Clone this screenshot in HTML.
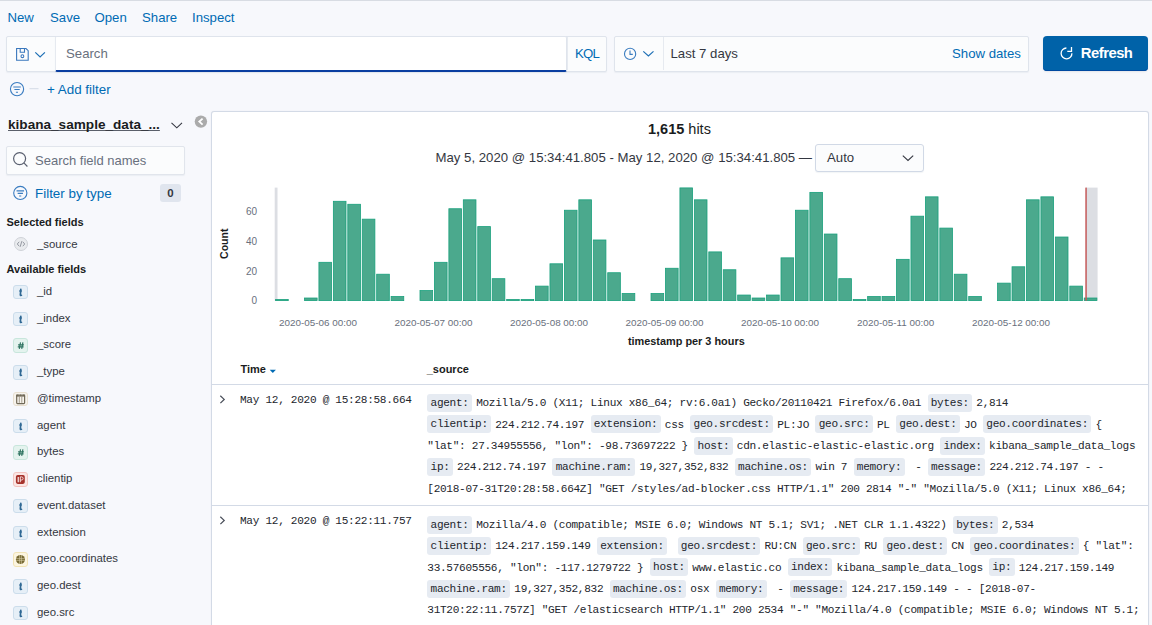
<!DOCTYPE html>
<html><head><meta charset="utf-8"><style>
*{box-sizing:border-box;margin:0;padding:0}
html,body{width:1152px;height:625px;overflow:hidden}
body{background:#F7F8FC;font-family:"Liberation Sans",sans-serif;color:#343741;position:relative}
.a{position:absolute;white-space:nowrap}
.lnk{color:#006BB4}
.menu{top:8px;font-size:13.2px;line-height:20px}
.box{position:absolute;border:1px solid #DFE4EC;background:#FBFCFD;border-radius:2px;box-shadow:0 1px 1px rgba(152,162,179,0.12)}
.fld{left:37px;font-size:11.4px;line-height:16px;color:#343741}
.ic{position:absolute;left:13px;width:14.7px;height:14.7px;border-radius:3px}
.it{background:#E4EEF6;border:1px solid #C9DCEB}
.in{background:#E2F3EE;border:1px solid #C5E5DC}
.mono{font-family:"Liberation Mono",monospace;font-size:11.1px;letter-spacing:-0.3px;color:#22252c}
.src{line-height:21.35px}
.src b{font-weight:400;background:#E6EBF2;border-radius:3px;padding:3.4px 3.25px 2.6px;margin-right:4.2px}
</style></head><body>
<div class="a" style="left:0;top:0;width:1152px;height:1px;background:#D8DCE3"></div>
<div class="a menu lnk" style="left:7.5px">New</div>
<div class="a menu lnk" style="left:50px">Save</div>
<div class="a menu lnk" style="left:94.5px">Open</div>
<div class="a menu lnk" style="left:142px">Share</div>
<div class="a menu lnk" style="left:192px">Inspect</div>
<div class="box" style="left:6px;top:36px;width:601px;height:36px"></div>
<div class="box" style="left:55px;top:36px;width:512px;height:36px;background:#fff;border-bottom:2px solid #0A3EA0"></div>
<div class="box" style="left:614px;top:36px;width:415px;height:36px"></div>
<div class="a" style="left:1043px;top:36px;width:105px;height:35px;background:#0062A8;border-radius:4px;box-shadow:inset 0 -1px 0 #0049A0,0 1px 2px rgba(0,0,0,0.08)"></div>
<svg class="a" style="left:0;top:0" width="1152" height="110" viewBox="0 0 1152 110">
 <g fill="none" stroke="#3B78BD" stroke-width="1.1">
  <path d="M16.6 48.5 H26 L28.2 50.7 V60.2 H16.6 Z"/>
  <path d="M20.2 48.5 V52.3 H24.5 V48.5"/>
  <circle cx="22.4" cy="56.2" r="1.4"/>
 </g>
 <path d="M35.3 52.4 L40.1 57 L44.9 52.4" fill="none" stroke="#1D6FB5" stroke-width="1.2"/>
 <g fill="none" stroke="#3B7DC0" stroke-width="1.1">
  <circle cx="630.1" cy="53.9" r="5.6"/>
  <path d="M630 50.4 V54.4 H632.8"/>
 </g>
 <path d="M643.3 51.4 L648.4 56 L653.5 51.4" fill="none" stroke="#1D6FB5" stroke-width="1.2"/>
 <line x1="663.5" y1="37" x2="663.5" y2="70" stroke="#E6EAF0" stroke-width="1"/>
 <line x1="567.5" y1="37" x2="567.5" y2="70" stroke="#E6EAF0" stroke-width="1"/>
 <line x1="55.5" y1="37" x2="55.5" y2="70" stroke="#E6EAF0" stroke-width="1"/>
 <g fill="none" stroke="#fff" stroke-width="1.3">
  <path d="M1066.4 48 A5.4 5.4 0 1 0 1071.9 53.2"/>
  <path d="M1071.5 47.1 V51.3 H1067.3"/>
 </g>
 <g fill="none" stroke="#3A7CC0" stroke-width="1.1">
  <circle cx="17.05" cy="89.1" r="6.6"/>
  <path d="M13.3 87 H20.8 M14.4 89.5 H19.7 M15.9 92.2 H18"/>
 </g>
 <line x1="29.5" y1="88.7" x2="38.5" y2="88.7" stroke="#D3DAE6" stroke-width="1"/>
</svg>
<div class="a" style="left:66px;top:44.1px;font-size:13.2px;line-height:20px;color:#69707D">Search</div>
<div class="a lnk" style="left:575px;top:44.1px;font-size:13.2px;line-height:20px;letter-spacing:-0.8px">KQL</div>
<div class="a" style="left:670.5px;top:44.1px;font-size:13.2px;line-height:20px;color:#343741">Last 7 days</div>
<div class="a lnk" style="left:952px;top:44.1px;font-size:13.2px;line-height:20px">Show dates</div>
<div class="a" style="left:1080.8px;top:43.3px;font-size:14.8px;line-height:20px;color:#fff;font-weight:700;letter-spacing:-0.5px">Refresh</div>
<div class="a lnk" style="left:47px;top:79.8px;font-size:13.4px;line-height:20px">+ Add filter</div>
<div class="a" style="left:8px;top:115.6px;font-size:13.6px;line-height:18px;font-weight:700;color:#1a1c21;text-decoration:underline;text-decoration-skip-ink:none;text-underline-offset:1px;text-decoration-color:#5a5f6a">kibana_sample_data_...</div>
<svg class="a" style="left:0;top:100px" width="211" height="110" viewBox="0 100 211 110">
 <path d="M171.5 122.8 L176.8 127.8 L182 122.8" fill="none" stroke="#343741" stroke-width="1.1"/>
 <circle cx="200.9" cy="121.6" r="6.2" fill="#ABABAB"/>
 <path d="M202.6 118.6 L199.3 121.6 L202.6 124.6" fill="none" stroke="#fff" stroke-width="1.8"/>
 <g fill="none" stroke="#3A7CC0" stroke-width="1.1">
  <circle cx="20.3" cy="192.95" r="6.6"/>
  <path d="M16.55 190.85 H24.05 M17.65 193.35 H22.95 M19.15 196.05 H21.25"/>
 </g>
</svg>
<div class="box" style="left:6px;top:146px;width:179px;height:29px;background:#FBFCFD;border-color:#E1E5EC"></div>
<svg class="a" style="left:0;top:140px" width="40" height="40" viewBox="0 140 40 40"><g fill="none" stroke="#5A6070" stroke-width="1.2"><circle cx="19.6" cy="158.6" r="6"/><path d="M23.9 162.9 L27.4 166.5"/></g></svg>
<div class="a" style="left:35px;top:152.3px;font-size:13px;line-height:18px;color:#69707D">Search field names</div>
<div class="a lnk" style="left:35px;top:184.6px;font-size:13.4px;line-height:18px">Filter by type</div>
<div class="a" style="left:160px;top:184px;width:21px;height:18px;background:#E0E5EE;border-radius:3px;font-size:11.5px;line-height:18px;text-align:center;font-weight:700;color:#343741">0</div>
<div class="a" style="left:6.5px;top:213.8px;font-size:11px;line-height:16px;font-weight:700;color:#1a1c21">Selected fields</div>
<div class="a" style="left:13.5px;top:237.2px;width:14px;height:14px;border-radius:50%;background:#E9EBEE;border:1px solid #CFD2D8"></div>
<svg class="a" style="left:13.5px;top:237.2px" width="14" height="14" viewBox="0 0 14 14"><path d="M5.2 4.8 L3.3 7 L5.2 9.2 M8.8 4.8 L10.7 7 L8.8 9.2 M7.8 4.2 L6.2 9.8" fill="none" stroke="#8A8F99" stroke-width="0.9"/></svg>
<div class="a fld" style="top:235.7px">_source</div>
<div class="a" style="left:6.5px;top:260.7px;font-size:11px;line-height:16px;font-weight:700;color:#1a1c21">Available fields</div>
<div class="ic" style="top:284.7px;background:#E6EFF7;border:1px solid #CCDDEB"><svg style="position:absolute;left:-1px;top:-1px" width="15" height="15" viewBox="0 0 15 15"><path d="M7.8 4.4 L7.35 9.9 Q7.4 10.6 8.4 10.3" fill="none" stroke="#2F6894" stroke-width="1.7" stroke-linecap="round"/><path d="M6.1 6 H9" stroke="#2F6894" stroke-width="1.1"/></svg></div><div class="a fld" style="top:282.7px">_id</div>
<div class="ic" style="top:311.5px;background:#E6EFF7;border:1px solid #CCDDEB"><svg style="position:absolute;left:-1px;top:-1px" width="15" height="15" viewBox="0 0 15 15"><path d="M7.8 4.4 L7.35 9.9 Q7.4 10.6 8.4 10.3" fill="none" stroke="#2F6894" stroke-width="1.7" stroke-linecap="round"/><path d="M6.1 6 H9" stroke="#2F6894" stroke-width="1.1"/></svg></div><div class="a fld" style="top:309.5px">_index</div>
<div class="ic" style="top:338.2px;background:#E4F3EE;border:1px solid #C8E6DC"><svg style="position:absolute;left:-1px;top:-1px" width="15" height="15" viewBox="0 0 15 15"><path d="M7.5 4.4 L6.3 10.9 M9.9 4.4 L8.7 10.9 M5.1 6.8 H10.9 M4.8 8.9 H10.6" fill="none" stroke="#2E7360" stroke-width="1.15"/></svg></div><div class="a fld" style="top:336.2px">_score</div>
<div class="ic" style="top:365.0px;background:#E6EFF7;border:1px solid #CCDDEB"><svg style="position:absolute;left:-1px;top:-1px" width="15" height="15" viewBox="0 0 15 15"><path d="M7.8 4.4 L7.35 9.9 Q7.4 10.6 8.4 10.3" fill="none" stroke="#2F6894" stroke-width="1.7" stroke-linecap="round"/><path d="M6.1 6 H9" stroke="#2F6894" stroke-width="1.1"/></svg></div><div class="a fld" style="top:363.0px">_type</div>
<div class="ic" style="top:391.7px;background:#F7F3EC;border:1px solid #E8DFCF"><svg style="position:absolute;left:-1px;top:-1px" width="15" height="15" viewBox="0 0 15 15"><rect x="3.7" y="3.2" width="7.9" height="8.4" rx="0.8" fill="none" stroke="#716957" stroke-width="1.2"/><rect x="3.2" y="2.6" width="8.9" height="2" fill="#716957"/><path d="M6.3 4.6 V10.8 M8.8 4.6 V10.8" stroke="#8F8775" stroke-width="0.8"/><path d="M6.1 2.4 V3.2 M9 2.4 V3.2" stroke="#F7F3EC" stroke-width="0.9"/></svg></div><div class="a fld" style="top:389.7px">@timestamp</div>
<div class="ic" style="top:418.5px;background:#E6EFF7;border:1px solid #CCDDEB"><svg style="position:absolute;left:-1px;top:-1px" width="15" height="15" viewBox="0 0 15 15"><path d="M7.8 4.4 L7.35 9.9 Q7.4 10.6 8.4 10.3" fill="none" stroke="#2F6894" stroke-width="1.7" stroke-linecap="round"/><path d="M6.1 6 H9" stroke="#2F6894" stroke-width="1.1"/></svg></div><div class="a fld" style="top:416.5px">agent</div>
<div class="ic" style="top:445.2px;background:#E4F3EE;border:1px solid #C8E6DC"><svg style="position:absolute;left:-1px;top:-1px" width="15" height="15" viewBox="0 0 15 15"><path d="M7.5 4.4 L6.3 10.9 M9.9 4.4 L8.7 10.9 M5.1 6.8 H10.9 M4.8 8.9 H10.6" fill="none" stroke="#2E7360" stroke-width="1.15"/></svg></div><div class="a fld" style="top:443.2px">bytes</div>
<div class="ic" style="top:472.0px;background:#FBE6E4;border:1px solid #F2C4C0"><svg style="position:absolute;left:-1px;top:-1px" width="15" height="15" viewBox="0 0 15 15"><rect x="2.9" y="2.9" width="8.9" height="9" rx="1.8" fill="#A6312A"/><path d="M5.2 4.9 V10.2" stroke="#fff" stroke-width="1.1"/><path d="M7.3 10.2 V4.9 H8.6 Q10.1 4.9 10.1 6.5 Q10.1 8 8.6 8 H7.3" fill="none" stroke="#F3DADA" stroke-width="1"/></svg></div><div class="a fld" style="top:470.0px">clientip</div>
<div class="ic" style="top:498.7px;background:#E6EFF7;border:1px solid #CCDDEB"><svg style="position:absolute;left:-1px;top:-1px" width="15" height="15" viewBox="0 0 15 15"><path d="M7.8 4.4 L7.35 9.9 Q7.4 10.6 8.4 10.3" fill="none" stroke="#2F6894" stroke-width="1.7" stroke-linecap="round"/><path d="M6.1 6 H9" stroke="#2F6894" stroke-width="1.1"/></svg></div><div class="a fld" style="top:496.7px">event.dataset</div>
<div class="ic" style="top:525.5px;background:#E6EFF7;border:1px solid #CCDDEB"><svg style="position:absolute;left:-1px;top:-1px" width="15" height="15" viewBox="0 0 15 15"><path d="M7.8 4.4 L7.35 9.9 Q7.4 10.6 8.4 10.3" fill="none" stroke="#2F6894" stroke-width="1.7" stroke-linecap="round"/><path d="M6.1 6 H9" stroke="#2F6894" stroke-width="1.1"/></svg></div><div class="a fld" style="top:523.5px">extension</div>
<div class="ic" style="top:552.2px;background:#FCF5E0;border:1px solid #F1E3B6"><svg style="position:absolute;left:-1px;top:-1px" width="15" height="15" viewBox="0 0 15 15"><circle cx="7.45" cy="7.45" r="4.5" fill="#766832"/><path d="M3.2 6.6 H11.7 M3.2 8.4 H11.7 M6.6 3 V12 M8.4 3 V12" stroke="#D9CFA8" stroke-width="0.6"/></svg></div><div class="a fld" style="top:550.2px">geo.coordinates</div>
<div class="ic" style="top:579.0px;background:#E6EFF7;border:1px solid #CCDDEB"><svg style="position:absolute;left:-1px;top:-1px" width="15" height="15" viewBox="0 0 15 15"><path d="M7.8 4.4 L7.35 9.9 Q7.4 10.6 8.4 10.3" fill="none" stroke="#2F6894" stroke-width="1.7" stroke-linecap="round"/><path d="M6.1 6 H9" stroke="#2F6894" stroke-width="1.1"/></svg></div><div class="a fld" style="top:577.0px">geo.dest</div>
<div class="ic" style="top:605.7px;background:#E6EFF7;border:1px solid #CCDDEB"><svg style="position:absolute;left:-1px;top:-1px" width="15" height="15" viewBox="0 0 15 15"><path d="M7.8 4.4 L7.35 9.9 Q7.4 10.6 8.4 10.3" fill="none" stroke="#2F6894" stroke-width="1.7" stroke-linecap="round"/><path d="M6.1 6 H9" stroke="#2F6894" stroke-width="1.1"/></svg></div><div class="a fld" style="top:603.7px">geo.src</div>
<div class="a" style="left:211px;top:111px;width:938px;height:530px;background:#fff;border:1px solid #D3DAE6;border-radius:3px;box-shadow:0 0 1px rgba(152,162,179,0.3)"></div>
<div class="a" style="left:648px;top:118.5px;font-size:14.5px;line-height:20px;color:#1a1c21"><b>1,615</b> hits</div>
<div class="a" style="left:435.5px;top:147.5px;font-size:13.2px;line-height:20px;color:#343741">May 5, 2020 @ 15:34:41.805 - May 12, 2020 @ 15:34:41.805 —</div>
<div class="box" style="left:815px;top:144px;width:109px;height:28px;background:#FBFCFD;border-color:#D1D9E6;border-radius:3px"></div>
<div class="a" style="left:827px;top:148px;font-size:13.2px;line-height:20px;color:#343741">Auto</div>
<svg class="a" style="left:900px;top:151.5px" width="20" height="14" viewBox="0 0 20 14"><path d="M2.8 3.6 L8 8.4 L13.2 3.6" fill="none" stroke="#343741" stroke-width="1.1"/></svg>
<svg class="a" style="left:0;top:0" width="1152" height="360" viewBox="0 0 1152 360">
<rect x="274.70" y="187.6" width="2.8" height="113" fill="#DCDEE3"/>
<rect x="1086" y="187.6" width="11.6" height="113" fill="#DCDEE3"/>
<rect x="275.60" y="299.51" width="12.64" height="1.09" fill="#4BA98D" stroke="#18A07C" stroke-width="0.8"/>
<rect x="304.48" y="298.02" width="12.64" height="2.58" fill="#4BA98D" stroke="#18A07C" stroke-width="0.8"/>
<rect x="318.92" y="262.31" width="12.64" height="38.29" fill="#4BA98D" stroke="#18A07C" stroke-width="0.8"/>
<rect x="333.36" y="201.30" width="12.64" height="99.30" fill="#4BA98D" stroke="#18A07C" stroke-width="0.8"/>
<rect x="347.80" y="204.28" width="12.64" height="96.32" fill="#4BA98D" stroke="#18A07C" stroke-width="0.8"/>
<rect x="362.24" y="219.16" width="12.64" height="81.44" fill="#4BA98D" stroke="#18A07C" stroke-width="0.8"/>
<rect x="376.68" y="274.22" width="12.64" height="26.38" fill="#4BA98D" stroke="#18A07C" stroke-width="0.8"/>
<rect x="391.12" y="296.54" width="12.64" height="4.06" fill="#4BA98D" stroke="#18A07C" stroke-width="0.8"/>
<rect x="420.00" y="290.58" width="12.64" height="10.02" fill="#4BA98D" stroke="#18A07C" stroke-width="0.8"/>
<rect x="434.44" y="262.31" width="12.64" height="38.29" fill="#4BA98D" stroke="#18A07C" stroke-width="0.8"/>
<rect x="448.88" y="208.74" width="12.64" height="91.86" fill="#4BA98D" stroke="#18A07C" stroke-width="0.8"/>
<rect x="463.32" y="199.82" width="12.64" height="100.78" fill="#4BA98D" stroke="#18A07C" stroke-width="0.8"/>
<rect x="477.76" y="226.60" width="12.64" height="74.00" fill="#4BA98D" stroke="#18A07C" stroke-width="0.8"/>
<rect x="492.20" y="278.68" width="12.64" height="21.92" fill="#4BA98D" stroke="#18A07C" stroke-width="0.8"/>
<rect x="506.64" y="299.51" width="12.64" height="1.09" fill="#4BA98D" stroke="#18A07C" stroke-width="0.8"/>
<rect x="521.08" y="299.51" width="12.64" height="1.09" fill="#4BA98D" stroke="#18A07C" stroke-width="0.8"/>
<rect x="535.52" y="286.12" width="12.64" height="14.48" fill="#4BA98D" stroke="#18A07C" stroke-width="0.8"/>
<rect x="549.96" y="263.80" width="12.64" height="36.80" fill="#4BA98D" stroke="#18A07C" stroke-width="0.8"/>
<rect x="564.40" y="210.23" width="12.64" height="90.37" fill="#4BA98D" stroke="#18A07C" stroke-width="0.8"/>
<rect x="578.84" y="199.82" width="12.64" height="100.78" fill="#4BA98D" stroke="#18A07C" stroke-width="0.8"/>
<rect x="593.28" y="239.99" width="12.64" height="60.61" fill="#4BA98D" stroke="#18A07C" stroke-width="0.8"/>
<rect x="607.72" y="272.73" width="12.64" height="27.87" fill="#4BA98D" stroke="#18A07C" stroke-width="0.8"/>
<rect x="622.16" y="293.56" width="12.64" height="7.04" fill="#4BA98D" stroke="#18A07C" stroke-width="0.8"/>
<rect x="651.04" y="293.56" width="12.64" height="7.04" fill="#4BA98D" stroke="#18A07C" stroke-width="0.8"/>
<rect x="665.48" y="268.26" width="12.64" height="32.34" fill="#4BA98D" stroke="#18A07C" stroke-width="0.8"/>
<rect x="679.92" y="187.91" width="12.64" height="112.69" fill="#4BA98D" stroke="#18A07C" stroke-width="0.8"/>
<rect x="694.36" y="199.82" width="12.64" height="100.78" fill="#4BA98D" stroke="#18A07C" stroke-width="0.8"/>
<rect x="708.80" y="251.90" width="12.64" height="48.70" fill="#4BA98D" stroke="#18A07C" stroke-width="0.8"/>
<rect x="723.24" y="269.75" width="12.64" height="30.85" fill="#4BA98D" stroke="#18A07C" stroke-width="0.8"/>
<rect x="737.68" y="295.05" width="12.64" height="5.55" fill="#4BA98D" stroke="#18A07C" stroke-width="0.8"/>
<rect x="752.12" y="298.02" width="12.64" height="2.58" fill="#4BA98D" stroke="#18A07C" stroke-width="0.8"/>
<rect x="766.56" y="295.05" width="12.64" height="5.55" fill="#4BA98D" stroke="#18A07C" stroke-width="0.8"/>
<rect x="781.00" y="257.85" width="12.64" height="42.75" fill="#4BA98D" stroke="#18A07C" stroke-width="0.8"/>
<rect x="795.44" y="210.23" width="12.64" height="90.37" fill="#4BA98D" stroke="#18A07C" stroke-width="0.8"/>
<rect x="809.88" y="192.38" width="12.64" height="108.22" fill="#4BA98D" stroke="#18A07C" stroke-width="0.8"/>
<rect x="824.32" y="234.04" width="12.64" height="66.56" fill="#4BA98D" stroke="#18A07C" stroke-width="0.8"/>
<rect x="838.76" y="278.68" width="12.64" height="21.92" fill="#4BA98D" stroke="#18A07C" stroke-width="0.8"/>
<rect x="853.20" y="299.51" width="12.64" height="1.09" fill="#4BA98D" stroke="#18A07C" stroke-width="0.8"/>
<rect x="867.64" y="296.54" width="12.64" height="4.06" fill="#4BA98D" stroke="#18A07C" stroke-width="0.8"/>
<rect x="882.08" y="296.54" width="12.64" height="4.06" fill="#4BA98D" stroke="#18A07C" stroke-width="0.8"/>
<rect x="896.52" y="259.34" width="12.64" height="41.26" fill="#4BA98D" stroke="#18A07C" stroke-width="0.8"/>
<rect x="910.96" y="216.18" width="12.64" height="84.42" fill="#4BA98D" stroke="#18A07C" stroke-width="0.8"/>
<rect x="925.40" y="196.84" width="12.64" height="103.76" fill="#4BA98D" stroke="#18A07C" stroke-width="0.8"/>
<rect x="939.84" y="228.09" width="12.64" height="72.51" fill="#4BA98D" stroke="#18A07C" stroke-width="0.8"/>
<rect x="954.28" y="274.22" width="12.64" height="26.38" fill="#4BA98D" stroke="#18A07C" stroke-width="0.8"/>
<rect x="968.72" y="296.54" width="12.64" height="4.06" fill="#4BA98D" stroke="#18A07C" stroke-width="0.8"/>
<rect x="997.60" y="283.14" width="12.64" height="17.46" fill="#4BA98D" stroke="#18A07C" stroke-width="0.8"/>
<rect x="1012.04" y="266.78" width="12.64" height="33.82" fill="#4BA98D" stroke="#18A07C" stroke-width="0.8"/>
<rect x="1026.48" y="199.82" width="12.64" height="100.78" fill="#4BA98D" stroke="#18A07C" stroke-width="0.8"/>
<rect x="1040.92" y="196.84" width="12.64" height="103.76" fill="#4BA98D" stroke="#18A07C" stroke-width="0.8"/>
<rect x="1055.36" y="237.02" width="12.64" height="63.58" fill="#4BA98D" stroke="#18A07C" stroke-width="0.8"/>
<rect x="1069.80" y="286.12" width="12.64" height="14.48" fill="#4BA98D" stroke="#18A07C" stroke-width="0.8"/>
<rect x="1084.24" y="298.02" width="12.64" height="2.58" fill="#4BA98D" stroke="#18A07C" stroke-width="0.8"/>
<rect x="1085.3" y="187.6" width="1.5" height="113" fill="#C55A5A"/>
<text x="257" y="214.7" text-anchor="end" font-family="Liberation Sans" font-size="10" fill="#69707D">60</text>
<text x="257" y="244.5" text-anchor="end" font-family="Liberation Sans" font-size="10" fill="#69707D">40</text>
<text x="257" y="274.6" text-anchor="end" font-family="Liberation Sans" font-size="10" fill="#69707D">20</text>
<text x="257" y="304.0" text-anchor="end" font-family="Liberation Sans" font-size="10" fill="#69707D">0</text>
<text x="318.0" y="326.1" text-anchor="middle" font-family="Liberation Sans" font-size="9.9" fill="#69707D">2020-05-06 00:00</text>
<text x="433.5" y="326.1" text-anchor="middle" font-family="Liberation Sans" font-size="9.9" fill="#69707D">2020-05-07 00:00</text>
<text x="549.1" y="326.1" text-anchor="middle" font-family="Liberation Sans" font-size="9.9" fill="#69707D">2020-05-08 00:00</text>
<text x="664.6" y="326.1" text-anchor="middle" font-family="Liberation Sans" font-size="9.9" fill="#69707D">2020-05-09 00:00</text>
<text x="780.1" y="326.1" text-anchor="middle" font-family="Liberation Sans" font-size="9.9" fill="#69707D">2020-05-10 00:00</text>
<text x="895.6" y="326.1" text-anchor="middle" font-family="Liberation Sans" font-size="9.9" fill="#69707D">2020-05-11 00:00</text>
<text x="1011.1" y="326.1" text-anchor="middle" font-family="Liberation Sans" font-size="9.9" fill="#69707D">2020-05-12 00:00</text>
<text x="686.3" y="344.8" text-anchor="middle" font-family="Liberation Sans" font-size="10.9" font-weight="700" fill="#1a1c21">timestamp per 3 hours</text>
<text transform="translate(227.6 243.7) rotate(-90)" text-anchor="middle" font-family="Liberation Sans" font-size="10.6" font-weight="700" fill="#1a1c21">Count</text>
</svg>
<div class="a" style="left:240.5px;top:360.8px;font-size:11px;line-height:16px;font-weight:700;color:#1a1c21">Time</div>
<svg class="a" style="left:268px;top:368px" width="10" height="6" viewBox="0 0 10 6"><path d="M1.7 1.7 H7.9 L4.8 5.1 Z" fill="#006BB4"/></svg>
<div class="a" style="left:426.7px;top:360.8px;font-size:11px;line-height:16px;font-weight:700;color:#1a1c21">_source</div>
<div class="a" style="left:212px;top:383.5px;width:936px;height:1px;background:#D3DAE6"></div>
<div class="a" style="left:212px;top:504.5px;width:936px;height:1px;background:#D3DAE6"></div>
<svg class="a" style="left:216px;top:392.5px" width="14" height="14" viewBox="0 0 14 14"><path d="M4.3 2.8 L8.2 6.4 L4.4 10.1" fill="none" stroke="#4A4F5A" stroke-width="1.25"/></svg>
<svg class="a" style="left:216px;top:513.8px" width="14" height="14" viewBox="0 0 14 14"><path d="M4.3 2.8 L8.2 6.4 L4.4 10.1" fill="none" stroke="#4A4F5A" stroke-width="1.25"/></svg>
<div class="a mono" style="left:240px;top:391.05px;line-height:18px">May 12, 2020 @ 15:28:58.664</div>
<div class="a mono" style="left:240px;top:512.25px;line-height:18px">May 12, 2020 @ 15:22:11.757</div>
<div class="a mono src" style="left:427.3px;top:393.27px;white-space:pre"><b>agent:</b>Mozilla/5.0 (X11; Linux x86_64; rv:6.0a1) Gecko/20110421 Firefox/6.0a1 <b>bytes:</b>2,814<br><b>clientip:</b>224.212.74.197 <b>extension:</b>css <b>geo.srcdest:</b>PL:JO <b>geo.src:</b>PL <b>geo.dest:</b>JO <b>geo.coordinates:</b>{<br>&quot;lat&quot;: 27.34955556, &quot;lon&quot;: -98.73697222 } <b>host:</b>cdn.elastic-elastic-elastic.org <b>index:</b>kibana_sample_data_logs<br><b>ip:</b>224.212.74.197 <b>machine.ram:</b>19,327,352,832 <b>machine.os:</b>win 7 <b>memory:</b> - <b>message:</b>224.212.74.197 - -<br>[2018-07-31T20:28:58.664Z] &quot;GET /styles/ad-blocker.css HTTP/1.1&quot; 200 2814 &quot;-&quot; &quot;Mozilla/5.0 (X11; Linux x86_64;</div>
<div class="a mono src" style="left:427.3px;top:515.0px;white-space:pre"><b>agent:</b>Mozilla/4.0 (compatible; MSIE 6.0; Windows NT 5.1; SV1; .NET CLR 1.1.4322) <b>bytes:</b>2,534<br><b>clientip:</b>124.217.159.149 <b>extension:</b> <b>geo.srcdest:</b>RU:CN <b>geo.src:</b>RU <b>geo.dest:</b>CN <b>geo.coordinates:</b>{ &quot;lat&quot;:<br>33.57605556, &quot;lon&quot;: -117.1279722 } <b>host:</b>www.elastic.co <b>index:</b>kibana_sample_data_logs <b>ip:</b>124.217.159.149<br><b>machine.ram:</b>19,327,352,832 <b>machine.os:</b>osx <b>memory:</b> - <b>message:</b>124.217.159.149 - - [2018-07-<br>31T20:22:11.757Z] &quot;GET /elasticsearch HTTP/1.1&quot; 200 2534 &quot;-&quot; &quot;Mozilla/4.0 (compatible; MSIE 6.0; Windows NT 5.1;</div>
</body></html>
